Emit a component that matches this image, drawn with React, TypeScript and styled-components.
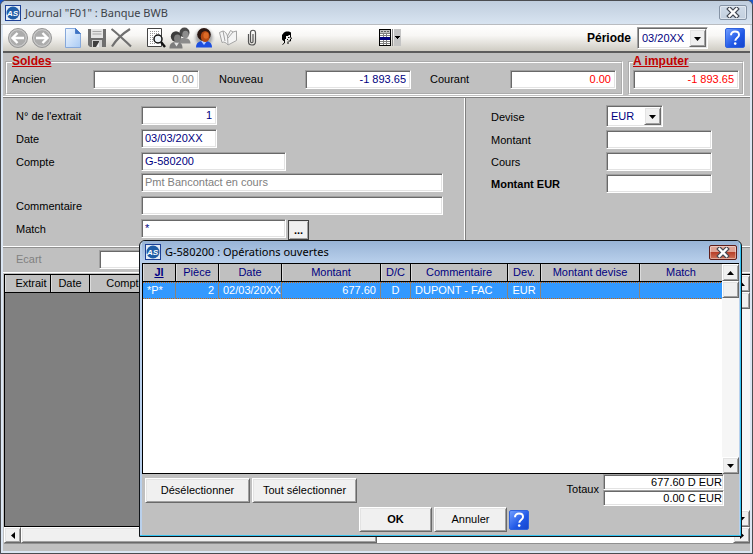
import React from "react";
import styled, { createGlobalStyle, css } from "styled-components";

const FACE = "#c0c0c0";
const NAVY = "#000080";

const GlobalStyle = createGlobalStyle`
  *, *::before, *::after { box-sizing: border-box; }
  body {
    margin: 0;
    background: #1d57c4;
    font-family: "Liberation Sans", Arial, sans-serif;
    font-size: 11px;
    line-height: 13px;
    color: #000;
  }
  button, input, select { font: inherit; color: inherit; margin: 0; }
`;

const sunken = css`
  border: 1px solid;
  border-color: #a0a0a0 #fff #fff #a0a0a0;
  box-shadow: inset 1px 1px 0 #696969, inset -1px -1px 0 #e3e3e3;
`;

const raised = css`
  border: 1px solid;
  border-color: #fff #696969 #696969 #fff;
  box-shadow: inset 1px 1px 0 #e3e3e3, inset -1px -1px 0 #a0a0a0;
  background: #f0f0f0;
`;

/* ---------- window frame ---------- */

const Window = styled.div`
  position: relative;
  display: flex;
  flex-direction: column;
  height: 100vh;
  border: 1px solid #4a4c50;
  border-radius: 6px 6px 0 0;
  background: #dbe6f3;
  padding: 0 2px 2px;
  overflow: hidden;
`;

const TitleBar = styled.header<{ $active?: boolean }>`
  display: flex;
  align-items: center;
  gap: 4px;
  flex: none;
  height: ${(p) => (p.$active ? 22 : 24)}px;
  padding: ${(p) => (p.$active ? "0 2px 0 3px" : "0 5px 0 4px")};
  border-bottom: ${(p) => (p.$active ? "0" : "1px solid #b9bcc0")};
  background: ${(p) => (p.$active ? "linear-gradient(#98b4d6, #b9d0ec)" : "linear-gradient(#bfcddd, #d8e4f1)")};
  margin: ${(p) => (p.$active ? "0" : "0 -2px")};
`;

const Title = styled.h1<{ $active?: boolean }>`
  flex: 1;
  margin: 0;
  font: 400 11px/16px "Noto Sans", "Open Sans", sans-serif;
  color: ${(p) => (p.$active ? "#000" : "#3d4248")};
  white-space: nowrap;
`;

const CloseButton = styled.button<{ $active?: boolean }>`
  display: grid;
  place-items: center;
  width: 28px;
  height: 15px;
  padding: 0;
  border: 1px solid ${(p) => (p.$active ? "#5e1d1a" : "#8593a5")};
  border-radius: 2px;
  box-shadow: inset 0 0 0 1px rgba(255, 255, 255, 0.4);
  background: ${(p) => (p.$active ? "linear-gradient(#e0a496 0 45%, #b8402a 50%, #cf7258)" : "linear-gradient(#cfdae7, #c3d0df)")};
`;

const Content = styled.main`
  flex: 1;
  min-height: 0;
  display: flex;
  flex-direction: column;
  background: ${FACE};
`;

/* ---------- toolbar ---------- */

const Toolbar = styled.div`
  display: flex;
  align-items: center;
  flex: none;
  height: 28px;
  padding: 0 5px 0 3px;
  border-bottom: 2px solid #5c5c5c;
  background: linear-gradient(#ffffff 0, #f8f7f5 40%, #cfccc3 100%);
`;

const ToolGroup = styled.div<{ $gap: number }>`
  display: flex;
  margin-left: ${(p) => p.$gap}px;
`;

const ToolButton = styled.button`
  display: grid;
  place-items: center;
  width: 24px;
  height: 24px;
  padding: 0;
  border: 0;
  background: none;
`;

const PeriodLabel = styled.label`
  margin: 0 6px 0 auto;
  font-size: 12px;
  font-weight: 700;
`;

const HelpButton = styled.button`
  display: grid;
  place-items: center;
  flex: none;
  width: 20px;
  height: 20px;
  padding: 0;
  border: 1px solid #2f62dd;
  border-radius: 2px;
  background: linear-gradient(135deg, #6f9dff, #1f57e6 60%, #1746cc);
`;

const PeriodHelp = styled.div`
  margin-left: 17px;
`;

/* ---------- form controls ---------- */

const Field = styled.input<{ $w?: number; $right?: boolean; $tone?: string }>`
  ${sunken}
  flex: none;
  width: ${(p) => p.$w ?? 106}px;
  height: 19px;
  padding: 0 4px 1px 3px;
  border-radius: 0;
  background: #fff;
  color: ${(p) => p.$tone ?? NAVY};
  text-align: ${(p) => (p.$right ? "right" : "left")};
  outline: none;
`;

const SelectBox = styled.div<{ $w: number }>`
  ${sunken}
  display: grid;
  grid-template-columns: 1fr 17px;
  flex: none;
  width: ${(p) => p.$w}px;
  height: 22px;
  padding: 1px;
  background: #fff;
`;

const SelectInput = styled.select`
  grid-area: 1 / 1 / 2 / 3;
  appearance: none;
  min-width: 0;
  padding: 0 3px;
  border: 0;
  background: transparent;
  color: ${NAVY};
  outline: none;
`;

const SelectArrow = styled.span`
  ${raised}
  grid-area: 1 / 2 / 2 / 3;
  display: grid;
  place-items: center;
  pointer-events: none;
`;

/* ---------- balances ---------- */

const Balances = styled.section`
  display: flex;
  flex: none;
  gap: 5px;
  height: 45px;
  padding: 2px 6px 0 2px;
  border-bottom: 1px solid #808080;
  box-shadow: inset 0 -1px 0 #fff;
`;

const Group = styled.fieldset<{ $grow?: boolean }>`
  display: flex;
  flex: ${(p) => (p.$grow ? "1" : "none")};
  min-width: 0;
  height: 40px;
  margin: 0;
  padding: ${(p) => (p.$grow ? "2px 5px 0" : "2px 3px 0")};
  border: 2px groove #fff;
`;

const Legend = styled.legend`
  padding: 0;
  font-size: 12px;
  line-height: 13px;
  font-weight: 700;
  color: #c00000;
  text-decoration: underline;
`;

const Balance = styled.div<{ $label: number; $gap?: number }>`
  display: grid;
  grid-template-columns: ${(p) => p.$label}px auto;
  align-items: center;
  height: 19px;
  margin-right: ${(p) => p.$gap ?? 0}px;
`;

/* ---------- entry form ---------- */

const Entry = styled.section`
  display: flex;
  flex: none;
  height: 149px;
  border-bottom: 1px solid #fff;
`;

const Pane = styled.div<{ $main?: boolean }>`
  flex: ${(p) => (p.$main ? "0 0 462px" : "1")};
  padding: ${(p) => (p.$main ? "8px 0 0 13px" : "7px 0 0 26px")};
  border-right: ${(p) => (p.$main ? "1px solid #fff" : "0")};
  box-shadow: ${(p) => (p.$main ? "1px 0 0 #808080" : "none")};
`;

const Rows = styled.div<{ $gap: number; $top?: number }>`
  display: flex;
  flex-direction: column;
  gap: ${(p) => p.$gap}px;
  margin-top: ${(p) => p.$top ?? 0}px;
`;

const Row = styled.div<{ $label: number }>`
  display: grid;
  grid-template-columns: ${(p) => p.$label}px auto auto 1fr;
  align-items: center;
`;

const Label = styled.label<{ $bold?: boolean }>`
  padding-top: 2px;
  font-weight: ${(p) => (p.$bold ? 700 : 400)};
`;

const BrowseButton = styled.button`
  ${raised}
  width: 21px;
  height: 20px;
  margin: 1px 0 -2px 2px;
  padding: 0;
  outline: 1px solid #404040;
  outline-offset: -1px;
  font-weight: 700;
`;

const GapRow = styled.div`
  display: grid;
  grid-template-columns: 83px auto;
  align-items: center;
  flex: none;
  height: 26px;
  padding: 0 0 1px 13px;
  border-top: 1px solid #909090;
  border-bottom: 1px solid #fff;
  color: #808080;
`;

/* ---------- data grids ---------- */

const Ledger = styled.section`
  flex: 1;
  min-height: 0;
  display: flex;
  flex-direction: column;
  margin: 1px 0 7px 1px;
`;

const GridArea = styled.div`
  flex: 1;
  min-height: 0;
  display: flex;
`;

const GridBody = styled.div<{ $bg: string }>`
  flex: 1;
  min-width: 0;
  border: 1px solid #000;
  border-right-width: 0;
  background: ${(p) => p.$bg};
`;

const Table = styled.table`
  width: 100%;
  table-layout: fixed;
  border-collapse: separate;
  border-spacing: 0;
`;

const HeadCell = styled.th<{ $link?: boolean; $tone?: string; $indent?: number }>`
  height: 18px;
  padding: 0 0 0 ${(p) => p.$indent ?? 0}px;
  overflow: hidden;
  border-right: 1px solid #000;
  border-bottom: 1px solid #000;
  box-shadow: inset 1px 0 0 #dcdcdc;
  background: ${FACE};
  color: ${(p) => p.$tone ?? "#000"};
  font-weight: ${(p) => (p.$link ? 700 : 400)};
  text-decoration: ${(p) => (p.$link ? "underline" : "none")};
  white-space: nowrap;
  &:last-child { border-right: 0; }
`;

const Cell = styled.td<{ $align?: "left" | "right" | "center" }>`
  height: 17px;
  padding: 0 4px;
  overflow: hidden;
  border-right: 1px solid #8e8478;
  background:
    repeating-linear-gradient(90deg, #c8640a 0 1px, #3399ff 1px 2px) top / 100% 1px no-repeat,
    repeating-linear-gradient(90deg, #c8640a 0 1px, #3399ff 1px 2px) bottom / 100% 1px no-repeat,
    #3399ff;
  color: #fff;
  text-align: ${(p) => p.$align ?? "left"};
  white-space: nowrap;
  &:last-child { border-right: 0; }
`;

const ScrollTrack = styled.div<{ $horizontal?: boolean }>`
  display: flex;
  flex: none;
  flex-direction: ${(p) => (p.$horizontal ? "row" : "column")};
  ${(p) => (p.$horizontal ? "height: 17px; border-bottom: 1px solid #909090; background: #fff;" : "width: 17px; border-top: 1px solid #000; background: #f6f6f6;")}
`;

const ScrollButton = styled.button`
  ${raised}
  display: grid;
  place-items: center;
  flex: 0 0 17px;
  min-width: 17px;
  padding: 0;
`;

const ScrollThumb = styled.div<{ $size: string }>`
  ${raised}
  flex: 0 0 ${(p) => p.$size};
`;

const Spacer = styled.div`
  flex: 1;
`;

/* ---------- dialog ---------- */

const Dialog = styled.section`
  position: absolute;
  left: 138px;
  top: 239px;
  right: 10px;
  bottom: 16px;
  display: flex;
  flex-direction: column;
  padding: 0 2px 1px;
  border: 1px solid #101418;
  border-radius: 6px 6px 0 0;
  background: #b9d0ec;
  box-shadow: inset -1px -1px 0 #35c4f2, inset 0 1px 0 #e8f2fb;
  overflow: hidden;
`;

const DialogFooter = styled.footer`
  flex: none;
  height: 61px;
  background: ${FACE};
`;

const SelectionRow = styled.div`
  display: flex;
  align-items: center;
  gap: 2px;
  height: 33px;
  padding: 0 15px 0 3px;
`;

const ActionRow = styled.div`
  display: flex;
  align-items: center;
  justify-content: center;
  gap: 2px;
  padding-left: 7px;
`;

const PushButton = styled.button<{ $w: number; $bold?: boolean }>`
  ${raised}
  width: ${(p) => p.$w}px;
  height: 25px;
  padding: 0;
  font-weight: ${(p) => (p.$bold ? 700 : 400)};
`;

const TotalsLabel = styled.label`
  margin: 0 2px 2px auto;
`;

const Totals = styled.div`
  align-self: flex-start;
  display: grid;
`;

const TotalField = styled.input`
  ${sunken}
  width: 121px;
  height: 16px;
  padding: 0 1px;
  background: #fff;
  text-align: right;
`;

/* ---------- drawings ---------- */

const AppIcon = () => (
  <svg width="16" height="16" viewBox="0 0 16 16" aria-hidden="true">
    <rect width="16" height="16" fill="#1b3f94" />
    <rect x="1" y="1" width="14" height="14" fill="#e4ecf6" />
    <circle cx="8" cy="8" r="6.500" fill="#1f5da6" />
    <text x="7.500" y="11" textAnchor="middle" fontSize="8" fontWeight="700" fontStyle="italic" fontFamily="Liberation Sans, sans-serif" fill="#fff">AS</text>
  </svg>
);

const CrossIcon = () => (
  <svg width="14" height="11" viewBox="0 0 14 11" aria-hidden="true">
    <path d="M3.500 2 10.500 9M10.500 2 3.500 9" stroke="#454a54" strokeWidth="4.600" strokeLinecap="square" />
    <path d="M3.500 2 10.500 9M10.500 2 3.500 9" stroke="#fff" strokeWidth="2.400" strokeLinecap="square" />
  </svg>
);

const QuestionIcon = () => (
  <svg width="14" height="16" viewBox="0 0 14 16" aria-hidden="true">
    <path d="M3 5.2C3 2.7 4.700 1.500 7 1.500s4 1.300 4 3.400c0 2.700-3.700 2.900-3.700 5.900" fill="none" stroke="#fff" strokeWidth="2" />
    <circle cx="7.200" cy="13.600" r="1.300" fill="#fff" />
  </svg>
);

const Arrow = ({ dir }: { dir: "up" | "down" | "left" | "right" }) => {
  const d = {
    up: "M0 6 3.500 2 7 6z",
    down: "M0 2h7L3.500 6z",
    left: "M6 0v7L2 3.500z",
    right: "M2 0v7l4-3.500z",
  }[dir];
  return (
    <svg width="7" height="7" viewBox="0 0 7 7" aria-hidden="true">
      <path d={d} fill="#000" />
    </svg>
  );
};

const NavIcon = ({ back }: { back?: boolean }) => (
  <svg width="22" height="22" viewBox="0 0 22 22" aria-hidden="true">
    <circle cx="11" cy="11" r="9.500" fill="#acacac" stroke="#979797" />
    <circle cx="11" cy="11" r="8.300" fill="none" stroke="#cfcfcf" />
    <path d={back ? "M17 11H6M10.500 6 5.500 11l5 5" : "M5 11h11M11.500 6l5 5-5 5"} fill="none" stroke="#fff" strokeWidth="2.400" />
  </svg>
);

const PageIcon = () => (
  <svg width="20" height="22" viewBox="0 0 20 22" aria-hidden="true">
    <defs>
      <linearGradient id="page" x1="0" y1="0" x2="1" y2="1">
        <stop offset="0" stopColor="#f2f8ff" />
        <stop offset="1" stopColor="#a8caf4" />
      </linearGradient>
    </defs>
    <path d="M2.500 1.500h10l5 5v14h-15z" fill="url(#page)" stroke="#86a8da" />
    <path d="M12.500 1.500v5h5z" fill="#3f74c4" stroke="#4a7cc8" />
  </svg>
);

const SaveIcon = () => (
  <svg width="20" height="20" viewBox="0 0 20 20" aria-hidden="true">
    <path d="M1 1h18v18H3l-2-2z" fill="#6f6f6f" />
    <rect x="4" y="1" width="12" height="9" fill="#e6e6e6" />
    <path d="M5.500 3.500h9M5.500 6h9" stroke="#a8a8a8" />
    <rect x="5" y="12" width="10" height="7" fill="#d0d0d0" />
    <rect x="6" y="13" width="6" height="6" fill="#3f3f3f" />
    <path d="M9 19l3-5v5z" fill="#eee" />
  </svg>
);

const DeleteIcon = () => (
  <svg width="22" height="20" viewBox="0 0 22 20" aria-hidden="true">
    <path d="M1.500 1C8 6 14 12 21 18.500M20 1C12 6 6 12 2 18.500" fill="none" stroke="#707070" strokeWidth="2.200" />
  </svg>
);

const PreviewIcon = () => (
  <svg width="20" height="20" viewBox="0 0 20 20" aria-hidden="true">
    <path d="M1.500.500h14v18h-14z" fill="#fff" stroke="#444" />
    <path d="M4 3.500h9M4 5.500h9M4 7.500h4M4 9.500h3M4 11.500h3M4 13.500h4M4 15.500h6" stroke="#999" strokeDasharray="1 1" />
    <circle cx="12" cy="11" r="4" fill="#eef4f8" stroke="#111" strokeWidth="1.500" />
    <path d="m15 14 4 5" stroke="#111" strokeWidth="2.400" />
  </svg>
);

const PeopleIcon = () => (
  <svg width="22" height="22" viewBox="0 0 22 22" aria-hidden="true">
    <path d="M9 16.500c0-4 2-5.500 5.500-5.500s7 1 7 5.500z" fill="#8b8b8b" />
    <circle cx="15.500" cy="5.500" r="5" fill="#4a4a4a" />
    <ellipse cx="16.500" cy="7.500" rx="3.200" ry="3.800" fill="#8d8d8d" />
    <path d="M.500 21.500c0-5 2-6.500 6.500-6.500s6.500 1.500 6.500 6.500z" fill="#7c7c7c" />
    <path d="m5 15.500 2.500 4 2.500-4z" fill="#e4e4e4" />
    <circle cx="7" cy="9.500" r="5.200" fill="#3c3c3c" />
    <ellipse cx="8.400" cy="11.500" rx="3.300" ry="4" fill="#7f7f7f" />
  </svg>
);

const UserIcon = () => (
  <svg width="24" height="24" viewBox="0 0 24 24" aria-hidden="true">
    <defs>
      <radialGradient id="halo">
        <stop offset="0" stopColor="#8f8f8f" />
        <stop offset="0.600" stopColor="#b0b0b0" />
        <stop offset="1" stopColor="#eeeeec" stopOpacity="0" />
      </radialGradient>
    </defs>
    <circle cx="12" cy="12" r="12" fill="url(#halo)" />
    <path d="M4 21.500c0-5 3-6.500 8-6.500s8 1.500 8 6.500z" fill="#1d4fe0" />
    <path d="m9 15 3 4 3-4z" fill="#b9ccff" />
    <ellipse cx="12" cy="8.500" rx="6.800" ry="6.500" fill="#2b1712" />
    <ellipse cx="13.200" cy="10.500" rx="4.400" ry="5.500" fill="#b34a14" />
    <ellipse cx="14" cy="9.500" rx="2.600" ry="3.200" fill="#dc6a26" />
  </svg>
);

const BookIcon = () => (
  <svg width="20" height="18" viewBox="0 0 20 18" aria-hidden="true">
    <path d="M1.500 3.500 5 2c2.500.500 3.500 2.500 4.500 5L12.500 1.500 15 3l3.500-1v9.500L10 16C8 13.500 6 12.500 4 13.500z" fill="#f4f4f4" stroke="#a4a4a4" />
    <path d="M9.500 7 10 16M5 2l2 10M15 3l-5 6" fill="none" stroke="#a4a4a4" />
  </svg>
);

const ClipIcon = () => (
  <svg width="10" height="18" viewBox="0 0 10 18" aria-hidden="true">
    <path d="M6 5v7.500c0 1.500-2.500 1.500-2.500 0V3.500c0-3 5-3 5 0v9.500c0 4-7 4-7 0V5" fill="none" stroke="#555" strokeWidth="1.200" />
  </svg>
);

const FaceIcon = () => (
  <svg width="12" height="14" viewBox="0 0 12 14" aria-hidden="true">
    <path d="M3 1.500 5 .500h3l2 1V4H8L7 5H5v3H4v2H2.500L1 8.500V4z" fill="#000" />
    <path d="M9.500 4v2l1 1.500-1 .500v2H7.500M3.500 10v2L1.500 13.500M7 10.500V13" fill="none" stroke="#000" />
    <path d="M7 6.500h1.500M6 8.500h1" stroke="#000" />
  </svg>
);

const ListIcon = () => (
  <svg width="22" height="18" viewBox="0 0 22 18" aria-hidden="true" shapeRendering="crispEdges">
    <rect width="12" height="17" fill="#000" />
    <rect x="1" y="1" width="10" height="15" fill="#fff" />
    <rect x="1" y="1" width="10" height="3" fill="#c0c0c0" />
    <path d="M2 2.500h8" stroke="#606060" strokeDasharray="2 1" />
    <path d="M1 4.500h10M1 6.500h10M1 12.500h10M1 14.500h10" stroke="#808080" />
    <path d="M4.500 4v12M7.500 4v12" stroke="#808080" />
    <rect x="1" y="8" width="10" height="3" fill="#000080" />
    <path d="M13.500 0v17" stroke="#888" />
    <rect x="15" width="7" height="17" fill="#c4c4c4" />
    <path d="M16 7h5v1h-1v1h-1v1h-1V9h-1V8h-1z" fill="#000" />
  </svg>
);

/* ---------- composed controls ---------- */

const Select = ({ id, width, value }: { id: string; width: number; value: string }) => (
  <SelectBox $w={width}>
    <SelectInput id={id} defaultValue={value}>
      <option>{value}</option>
    </SelectInput>
    <SelectArrow><Arrow dir="down" /></SelectArrow>
  </SelectBox>
);

const Tool = ({ name, children }: { name: string; children: React.ReactNode }) => (
  <ToolButton type="button" aria-label={name}>{children}</ToolButton>
);

const VerticalScroll = () => (
  <ScrollTrack>
    <ScrollButton type="button" aria-label="Haut"><Arrow dir="up" /></ScrollButton>
    <ScrollThumb $size="17px" />
    <Spacer />
    <ScrollButton type="button" aria-label="Bas"><Arrow dir="down" /></ScrollButton>
  </ScrollTrack>
);

type Align = "left" | "right" | "center";

const operationColumns: { title: string; width?: number; value: string; align?: Align }[] = [
  { title: "Jl", width: 33, value: "*P*" },
  { title: "Pièce", width: 43, value: "2", align: "right" },
  { title: "Date", width: 63, value: "02/03/20XX" },
  { title: "Montant", width: 99, value: "677.60", align: "right" },
  { title: "D/C", width: 30, value: "D", align: "center" },
  { title: "Commentaire", width: 97, value: "DUPONT - FAC" },
  { title: "Dev.", width: 33, value: "EUR", align: "center" },
  { title: "Montant devise", width: 99, value: "" },
  { title: "Match", value: "" },
];

const OperationsDialog = () => (
  <Dialog role="dialog" aria-label="Opérations ouvertes">
    <TitleBar $active>
      <AppIcon />
      <Title as="h2" $active>G-580200 : Opérations ouvertes</Title>
      <CloseButton type="button" $active aria-label="Fermer"><CrossIcon /></CloseButton>
    </TitleBar>
    <GridArea>
      <GridBody $bg="#fff">
        <Table>
          <colgroup>
            {operationColumns.map((c) => <col key={c.title} width={c.width} />)}
          </colgroup>
          <thead>
            <tr>
              {operationColumns.map((c, i) => (
                <HeadCell key={c.title} $tone={NAVY} $link={i === 0}>{c.title}</HeadCell>
              ))}
            </tr>
          </thead>
          <tbody>
            <tr>
              {operationColumns.map((c) => <Cell key={c.title} $align={c.align}>{c.value}</Cell>)}
            </tr>
          </tbody>
        </Table>
      </GridBody>
      <VerticalScroll />
    </GridArea>
    <DialogFooter>
      <SelectionRow>
        <PushButton type="button" $w={105}>Désélectionner</PushButton>
        <PushButton type="button" $w={105}>Tout sélectionner</PushButton>
        <TotalsLabel htmlFor="total-debit">Totaux</TotalsLabel>
        <Totals>
          <TotalField id="total-debit" readOnly value="677.60 D EUR" />
          <TotalField aria-label="Total crédit" readOnly value="0.00 C EUR" />
        </Totals>
      </SelectionRow>
      <ActionRow>
        <PushButton type="button" $w={73} $bold>OK</PushButton>
        <PushButton type="button" $w={73}>Annuler</PushButton>
        <HelpButton type="button" aria-label="Aide"><QuestionIcon /></HelpButton>
      </ActionRow>
    </DialogFooter>
  </Dialog>
);

export default function App() {
  return (
    <>
      <GlobalStyle />
      <Window>
        <TitleBar>
          <AppIcon />
          <Title>Journal "F01" : Banque BWB</Title>
          <CloseButton type="button" aria-label="Fermer"><CrossIcon /></CloseButton>
        </TitleBar>
        <Content>
          <Toolbar>
            <ToolGroup $gap={0}>
              <Tool name="Précédent"><NavIcon back /></Tool>
              <Tool name="Suivant"><NavIcon /></Tool>
            </ToolGroup>
            <ToolGroup $gap={7}>
              <Tool name="Nouveau"><PageIcon /></Tool>
              <Tool name="Enregistrer"><SaveIcon /></Tool>
              <Tool name="Supprimer"><DeleteIcon /></Tool>
            </ToolGroup>
            <ToolGroup $gap={11}>
              <Tool name="Aperçu"><PreviewIcon /></Tool>
              <Tool name="Tiers"><PeopleIcon /></Tool>
              <Tool name="Client"><UserIcon /></Tool>
              <Tool name="Livre"><BookIcon /></Tool>
              <Tool name="Annexe"><ClipIcon /></Tool>
            </ToolGroup>
            <ToolGroup $gap={11}>
              <Tool name="Contact"><FaceIcon /></Tool>
            </ToolGroup>
            <ToolGroup $gap={79}>
              <Tool name="Liste"><ListIcon /></Tool>
            </ToolGroup>
            <PeriodLabel htmlFor="period">Période</PeriodLabel>
            <Select id="period" width={71} value="03/20XX" />
            <PeriodHelp>
              <HelpButton type="button" aria-label="Aide"><QuestionIcon /></HelpButton>
            </PeriodHelp>
          </Toolbar>

          <Balances>
            <Group $grow>
              <Legend>Soldes</Legend>
              <Balance $label={81} $gap={20}>
                <label htmlFor="old">Ancien</label>
                <Field id="old" readOnly $right $tone="#808080" value="0.00" />
              </Balance>
              <Balance $label={86} $gap={19}>
                <label htmlFor="new">Nouveau</label>
                <Field id="new" readOnly $right value="-1 893.65" />
              </Balance>
              <Balance $label={80}>
                <label htmlFor="current">Courant</label>
                <Field id="current" readOnly $right $tone="#f00" value="0.00" />
              </Balance>
            </Group>
            <Group>
              <Legend>A imputer</Legend>
              <Field aria-label="A imputer" readOnly $right $tone="#f00" value="-1 893.65" />
            </Group>
          </Balances>

          <Entry>
            <Pane $main>
              <Rows $gap={4}>
                <Row $label={125}>
                  <Label htmlFor="number">N° de l'extrait</Label>
                  <Field id="number" $w={76} $right defaultValue="1" />
                </Row>
                <Row $label={125}>
                  <Label htmlFor="date">Date</Label>
                  <Field id="date" $w={76} defaultValue="03/03/20XX" />
                </Row>
                <Row $label={125}>
                  <Label htmlFor="account">Compte</Label>
                  <Field id="account" $w={145} defaultValue="G-580200" />
                </Row>
              </Rows>
              <Rows $gap={4} $top={2}>
                <Row $label={125}>
                  <span />
                  <Field aria-label="Libellé du compte" readOnly $w={302} $tone="#808080" value="Pmt Bancontact en cours" />
                </Row>
                <Row $label={125}>
                  <Label htmlFor="comment">Commentaire</Label>
                  <Field id="comment" $w={302} />
                </Row>
                <Row $label={125}>
                  <Label htmlFor="match">Match</Label>
                  <Field id="match" $w={145} defaultValue="*" />
                  <BrowseButton type="button">...</BrowseButton>
                </Row>
              </Rows>
            </Pane>
            <Pane>
              <Rows $gap={3}>
                <Row $label={115}>
                  <Label htmlFor="currency">Devise</Label>
                  <Select id="currency" width={57} value="EUR" />
                </Row>
                <Row $label={115}>
                  <Label htmlFor="amount">Montant</Label>
                  <Field id="amount" />
                </Row>
                <Row $label={115}>
                  <Label htmlFor="rate">Cours</Label>
                  <Field id="rate" />
                </Row>
                <Row $label={115}>
                  <Label htmlFor="amount-eur" $bold>Montant EUR</Label>
                  <Field id="amount-eur" />
                </Row>
              </Rows>
            </Pane>
          </Entry>

          <GapRow>
            <label htmlFor="gap">Ecart</label>
            <Field id="gap" readOnly />
          </GapRow>

          <Ledger>
            <GridArea>
              <GridBody $bg="#808080">
                <Table>
                  <colgroup>
                    <col width={46} />
                    <col width={39} />
                    <col width={72} />
                    <col />
                  </colgroup>
                  <thead>
                    <tr>
                      <HeadCell $indent={7}>Extrait</HeadCell>
                      <HeadCell>Date</HeadCell>
                      <HeadCell>Compte</HeadCell>
                      <HeadCell aria-label="Détail" />
                    </tr>
                  </thead>
                </Table>
              </GridBody>
              <VerticalScroll />
            </GridArea>
            <ScrollTrack $horizontal>
              <ScrollButton type="button" aria-label="Gauche"><Arrow dir="left" /></ScrollButton>
              <ScrollThumb $size="calc(50% - 17px)" />
              <Spacer />
              <ScrollButton type="button" aria-label="Droite"><Arrow dir="right" /></ScrollButton>
            </ScrollTrack>
          </Ledger>
        </Content>
        <OperationsDialog />
      </Window>
    </>
  );
}
